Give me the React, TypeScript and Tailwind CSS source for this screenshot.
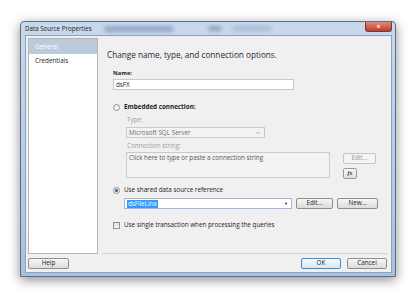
import { ChevronDown } from "lucide-react";

const font = { fontFamily: '"Open Sans", "Noto Sans", sans-serif' };

function Button({ label, width, primary = false, disabled = false }: { label: string; width: string; primary?: boolean; disabled?: boolean }) {
  return (
    <div
      className={`flex h-[11px] items-center justify-center rounded-[2px] border text-[6.3px] leading-none ${width} ${
        primary
          ? "border-[#3c8fd4] bg-gradient-to-b from-[#f4f9fd] to-[#d9e6f1] text-[#222]"
          : disabled
            ? "border-[#c4c4c4] bg-[#f4f4f4] text-[#9a9a9a]"
            : "border-[#8e8e8e] bg-gradient-to-b from-[#f6f6f6] to-[#dcdcdc] text-[#222]"
      }`}
    >
      {label}
    </div>
  );
}

function Radio({ checked = false }: { checked?: boolean }) {
  return (
    <span className="flex h-[7px] w-[7px] items-center justify-center rounded-full border border-[#8f8f8f] bg-gradient-to-b from-[#e6e6e6] to-[#ffffff]">
      {checked && <span className="h-[3px] w-[3px] rounded-full bg-[#2a5a8c]" />}
    </span>
  );
}

export default function App() {
  return (
    <div className="h-[297px] w-[416px] bg-white pl-[20px] pt-[21px]" style={font}>
      <div className="flex h-[256px] w-[376px] flex-col rounded-t-[4px] border border-[#5a6f88] bg-gradient-to-b from-[#c9d9ec] to-[#a9c1de] shadow-[0_3px_12px_rgba(0,0,0,0.45)]">
        {/* title bar */}
        <div className="relative flex h-[13px] items-center pl-[4px]">
          <span className="text-[6.2px] text-[#1e1e1e]">Data Source Properties</span>
          <span className="ml-[12px] h-[6px] w-[70px] rounded-full bg-[#6f86ad] opacity-60 blur-[2px]" />
          <span className="ml-[34px] h-[5px] w-[14px] rounded-full bg-[#51698f] opacity-50 blur-[2px]" />
          <span className="ml-[10px] h-[5px] w-[40px] rounded-full bg-[#8fa6c6] opacity-60 blur-[2px]" />
          <div className="ml-auto mr-[3px] flex h-[10px] w-[27px] items-center justify-center self-start rounded-b-[3px] border border-t-0 border-[#7a3a32] bg-gradient-to-b from-[#e08a78] to-[#c0392b] text-[7px] font-bold leading-none text-white">
            ×
          </div>
        </div>

        {/* client area */}
        <div className="mb-[3px] ml-[4px] mr-[3px] flex flex-1 flex-col border border-[#8da3bd] bg-[#f0f0f0]">
          <div className="flex flex-1 pl-[2px] pt-[2px]">
            {/* nav */}
            <div className="h-[216px] w-[70px] border border-[#b7b7b7] bg-white text-[6.3px]">
              <div className="flex h-[15px] items-center bg-[#bccbdb] pl-[6px] text-white">General</div>
              <div className="flex h-[13px] items-center pl-[6px] text-[#1e1e1e]">Credentials</div>
            </div>

            {/* content */}
            <div className="flex flex-1 flex-col pl-[4px] pr-[3px]">
              <div className="flex flex-1 flex-col border-b border-[#d5d5d5] pl-[5px] pt-[11px] text-[#1e1e1e]">
                <div className="h-[12px] text-[8.2px] leading-[12px] text-[#1e2a3a]">Change name, type, and connection options.</div>

                <div className="ml-[6px] mt-[8px] text-[5.8px] font-bold leading-[8px]">Name:</div>
                <div className="ml-[6px] mt-[2px] flex h-[11px] w-[181px] items-center border border-[#c4c8cf] bg-white pl-[2px] text-[6.3px]">dsFX</div>

                <div className="ml-[6px] mt-[13px] flex h-[8px] items-center gap-[4px]">
                  <Radio />
                  <span className="text-[6.3px] font-bold">Embedded connection:</span>
                </div>
                <div className="ml-[20px] mt-[5px] text-[6.3px] leading-[8px] text-[#a0a0a0]">Type:</div>
                <div className="ml-[19px] mt-[3px] flex h-[11px] w-[139px] items-center justify-between border border-[#c9c9c9] bg-[#f3f3f3] pl-[2px] pr-[3px] text-[6.3px] text-[#6d6d6d]">
                  Microsoft SQL Server
                  <ChevronDown size={6} strokeWidth={3} className="text-[#9a9a9a]" />
                </div>
                <div className="ml-[20px] mt-[4px] text-[6.3px] leading-[8px] text-[#a0a0a0]">Connection string:</div>
                <div className="ml-[19px] mt-[2px] flex gap-[13px]">
                  <div className="h-[26px] w-[204px] border border-[#c9c9c9] bg-[#f3f3f3] pl-[2px] pt-[1px] text-[6.3px] leading-[8px] text-[#555]">
                    Click here to type or paste a connection string
                  </div>
                  <div className="flex flex-col gap-[4px] pt-[1px]">
                    <Button label="Edit..." width="w-[33px]" disabled />
                    <div className="flex h-[11px] w-[14px] items-center justify-center rounded-[2px] border border-[#9a9a9a] bg-gradient-to-b from-[#f8f8f8] to-[#e0e0e0] text-[6px] font-bold italic text-[#333]" style={{ fontFamily: '"Liberation Serif", serif' }}>
                      fx
                    </div>
                  </div>
                </div>

                <div className="ml-[6px] mt-[7px] flex h-[8px] items-center gap-[4px]">
                  <Radio checked />
                  <span className="text-[6.3px]">Use shared data source reference</span>
                </div>
                <div className="ml-[17px] mt-[4px] flex items-center">
                  <div className="flex h-[11px] w-[168px] items-center justify-between border border-[#9fb9d6] bg-white pl-[2px] pr-[3px]">
                    <span className="bg-[#3399ff] px-[1px] text-[6.3px] leading-[8px] text-white">dsFileLinx</span>
                    <span className="text-[4px] leading-none text-[#222]">▼</span>
                  </div>
                  <Button label="Edit..." width="ml-[4px] w-[37px]" />
                  <Button label="New..." width="ml-[4px] w-[41px]" />
                </div>

                <div className="ml-[6px] mt-[12px] flex h-[8px] items-center gap-[4px]">
                  <span className="h-[7px] w-[7px] border border-[#8f8f8f] bg-gradient-to-b from-[#dcdcdc] to-[#f8f8f8]" />
                  <span className="text-[6.3px]">Use single transaction when processing the queries</span>
                </div>
              </div>
            </div>
          </div>

          {/* bottom buttons */}
          <div className="flex h-[18px] items-start pl-[2px] pr-[4px] pt-[4px]">
            <Button label="Help" width="w-[41px]" />
            <div className="ml-auto flex gap-[6px]">
              <Button label="OK" width="w-[40px]" primary />
              <Button label="Cancel" width="w-[40px]" />
            </div>
          </div>
        </div>
      </div>
    </div>
  );
}
